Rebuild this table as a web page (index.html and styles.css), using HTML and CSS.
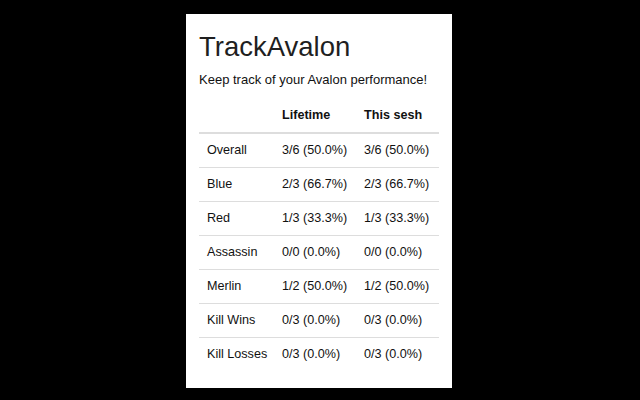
FILE: index.html
```html
<!DOCTYPE html>
<html lang="en">
<head>
<meta charset="utf-8">
<title>TrackAvalon</title>
<link rel="stylesheet" href="styles.css">
</head>
<body>
<main class="popup">
  <h1 class="title">TrackAvalon</h1>
  <p class="subtitle">Keep track of your Avalon performance!</p>
  <table class="stats">
    <colgroup>
      <col class="col-label">
      <col class="col-life">
      <col class="col-sesh">
    </colgroup>
    <thead>
      <tr><th></th><th>Lifetime</th><th>This sesh</th></tr>
    </thead>
    <tbody>
      <tr><td>Overall</td><td>3/6 (50.0%)</td><td>3/6 (50.0%)</td></tr>
      <tr><td>Blue</td><td>2/3 (66.7%)</td><td>2/3 (66.7%)</td></tr>
      <tr><td>Red</td><td>1/3 (33.3%)</td><td>1/3 (33.3%)</td></tr>
      <tr><td>Assassin</td><td>0/0 (0.0%)</td><td>0/0 (0.0%)</td></tr>
      <tr><td>Merlin</td><td>1/2 (50.0%)</td><td>1/2 (50.0%)</td></tr>
      <tr><td>Kill Wins</td><td>0/3 (0.0%)</td><td>0/3 (0.0%)</td></tr>
      <tr><td>Kill Losses</td><td>0/3 (0.0%)</td><td>0/3 (0.0%)</td></tr>
    </tbody>
  </table>
</main>
</body>
</html>
```
FILE: styles.css
```css
html, body {
  margin: 0;
  padding: 0;
  background: #000;
}
body {
  width: 640px;
  height: 400px;
  box-sizing: border-box;
  padding: 14px 0 0 186px;
  font-family: "Liberation Sans", Arial, Helvetica, sans-serif;
  color: #222;
}
.popup {
  width: 240px;
  background: #fff;
  padding: 18px 13px 17px 13px;
}
.title {
  margin: 0;
  font-size: 27.5px;
  line-height: 30px;
  font-weight: normal;
  color: #1f1f1f;
}
.subtitle {
  margin: 9px 0 10px 0;
  font-size: 13px;
  line-height: 18px;
  color: #111;
}
.stats {
  width: 240px;
  border-collapse: collapse;
  border-spacing: 0;
  table-layout: fixed;
  font-size: 12.6px;
  color: #111;
}
.col-label { width: 75px; }
.col-life { width: 82px; }
.col-sesh { width: 83px; }
.stats th,
.stats td {
  padding: 8px 0 8px 8px;
  line-height: 17px;
  text-align: left;
  white-space: nowrap;
}
.stats th {
  font-weight: bold;
  border-bottom: 2px solid #ddd;
}
.stats tbody td {
  border-top: 1px solid #ddd;
}
.stats tbody tr:first-child td {
  border-top: 0;
}
```
